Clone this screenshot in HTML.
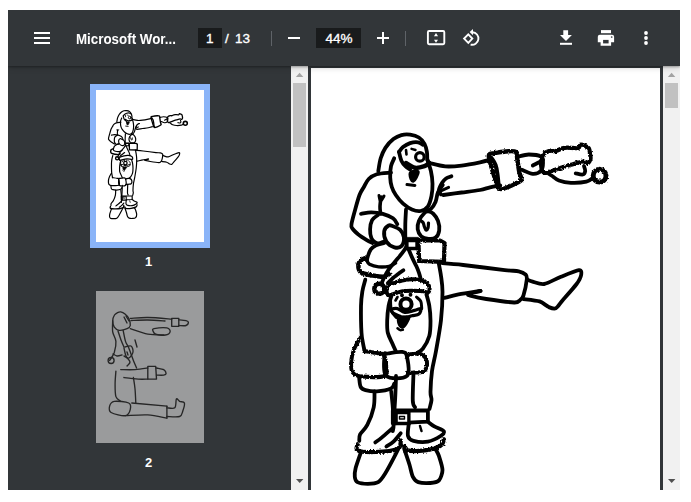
<!DOCTYPE html>
<html><head><meta charset="utf-8">
<style>
html,body{margin:0;padding:0;background:#fff;width:691px;height:502px;overflow:hidden;font-family:"Liberation Sans",sans-serif;}
.a{position:absolute;}
#frame{left:8px;top:10px;width:672px;height:480px;background:#323639;overflow:hidden;}
#toolbar{left:8px;top:10px;width:672px;height:56px;background:#323639;z-index:5;clip-path:inset(0 0 -10px 0);box-shadow:0 1px 2px rgba(0,0,0,0.3),0 2px 6px rgba(0,0,0,0.15);}
.txt{position:absolute;color:#fff;font-size:13px;white-space:nowrap;line-height:16px;-webkit-text-stroke:0.35px #fff;}
.box{position:absolute;background:#191b1c;}
.sep{position:absolute;width:1px;background:#5f6368;}
.sb{position:absolute;background:#f1f1f1;}
.thumb{position:absolute;background:#c1c1c1;}
</style></head><body>
<div id="frame" class="a"></div>
<div id="toolbar" class="a"></div>
<div class="a" style="left:0;top:0;width:691px;height:502px;z-index:6">
 <div class="txt" style="left:76px;top:30.5px;font-size:15px;font-weight:bold;-webkit-text-stroke:0;transform:scaleX(0.89);transform-origin:0 0">Microsoft Wor...</div>
 <div class="box" style="left:198px;top:28px;width:24px;height:20px"></div>
 <div class="txt" style="left:206px;top:31px;font-size:13.5px">1</div>
 <div class="txt" style="left:225px;top:31px;font-size:13.5px">/</div>
 <div class="txt" style="left:235px;top:31px;font-size:13.5px">13</div>
 <div class="sep" style="left:271px;top:31px;height:15px"></div>
 <div class="box" style="left:316px;top:28px;width:45px;height:20px"></div>
 <div class="txt" style="left:325.5px;top:31px;font-size:13.5px">44%</div>
 <div class="sep" style="left:405px;top:31px;height:15px"></div>
 <svg class="a" style="left:0;top:0" width="691" height="66">
  <g fill="#fff">
   <rect x="34" y="32" width="16" height="2"/>
   <rect x="34" y="37" width="16" height="2"/>
   <rect x="34" y="42" width="16" height="2"/>
   <!-- minus -->
   <rect x="288" y="37" width="12" height="2"/>
   <!-- plus -->
   <rect x="377" y="37" width="12" height="2"/>
   <rect x="382" y="32" width="2" height="12"/>
   <!-- download -->
   <path d="M563.3 30.3h4.8v4.8h3.8L566 41.1l-6-6h3.3z"/>
   <rect x="560" y="42.8" width="12" height="2"/>
   <!-- print -->
   <rect x="601" y="30.1" width="10" height="3.1"/>
   <path d="M599.8 34.8h12.3a2 2 0 0 1 2 2v5.5h-3v3.5h-10.5v-3.5h-2.8v-5.5a2 2 0 0 1 2-2z"/>
   <circle cx="646" cy="33" r="1.9"/>
   <circle cx="646" cy="38" r="1.9"/>
   <circle cx="646" cy="43" r="1.9"/>
   <!-- fit arrows -->
   <path d="M434 36.2h4l-2-3.1z"/>
   <path d="M434 39.7h4l-2 3.1z"/>
   <!-- rotate arrow head -->
   <path d="M473 29l-3.4 3.1 3.4 3.1z"/>
  </g>
  <g fill="#323639"><rect x="603.1" y="39.9" width="5.5" height="3.5"/></g>
  <circle cx="611.7" cy="37" r="0.85" fill="#323639"/>
  <g fill="none" stroke="#fff" stroke-width="1.9">
   <rect x="427.9" y="31" width="16.4" height="13.3" rx="1.2"/>
   <path d="M468.3 34.4l4 4.2-4 4.2-4.2-4.2z"/>
   <path d="M472.5 32.2A6.3 6.3 0 1 1 470.6 44.6"/>
  </g>
 </svg>
</div>
<!-- sidebar -->
<div class="a" style="left:90px;top:84px;width:108px;height:152px;border:6px solid #8ab4f8;background:#fff"></div>
<div class="txt" style="left:145px;top:254px;font-weight:bold;font-size:13px;-webkit-text-stroke:0">1</div>
<div class="a" style="left:96px;top:291px;width:108px;height:152px;background:#9a9b9c"></div>
<div class="txt" style="left:145px;top:455px;font-weight:bold;font-size:13px;-webkit-text-stroke:0">2</div>
<div class="sb" style="left:291px;top:66px;width:17px;height:424px"></div>
<div class="thumb" style="left:293px;top:83px;width:13px;height:64px"></div>

<!-- main -->
<div class="a" style="left:311px;top:68px;width:349px;height:422px;background:#fff"></div>
<svg class="a" style="left:0;top:0" width="691" height="502"><defs><clipPath id="pc"><rect x="311" y="68" width="349" height="422"/></clipPath></defs><g clip-path="url(#pc)"><!--DRAW--><filter id="fur" x="-20%" y="-20%" width="140%" height="140%"><feTurbulence type="fractalNoise" baseFrequency="0.6" numOctaves="1" seed="3"/><feDisplacementMap in="SourceGraphic" scale="3.5" xChannelSelector="R" yChannelSelector="G"/></filter><g id="santa" stroke="#000" stroke-linecap="round" stroke-linejoin="round"><path d="M378.3 171.0C378.7 168.9 379.5 162.2 380.7 158.3C381.9 154.5 383.3 151.1 385.4 147.9C387.5 144.7 390.7 141.2 393.4 139.1C396.1 137.0 398.6 135.8 401.4 135.1C404.2 134.4 407.2 134.3 410.1 134.7C413.0 135.1 416.5 136.0 418.9 137.5C421.3 139.0 423.2 141.5 424.5 143.9C425.8 146.3 426.4 149.2 426.9 151.9C427.4 154.6 427.0 158.1 427.4 159.9C427.8 161.7 429.0 162.2 429.3 162.7" stroke-width="3.8" fill="none"/><path d="M399.0 151.9C399.7 151.1 401.1 148.6 403.0 147.1C404.9 145.6 407.6 143.9 410.1 143.1C412.6 142.3 416.0 142.0 418.1 142.3C420.2 142.6 422.1 144.3 422.9 144.7" stroke-width="3.8" fill="none"/><path d="M399.0 151.9C399.4 153.4 400.3 158.3 401.4 160.7C402.5 163.1 403.9 164.8 405.4 166.2C406.8 167.6 409.3 168.9 410.1 169.4" stroke-width="3.8" fill="none"/><path d="M394.2 158.3C393.7 159.6 391.7 163.0 391.0 166.2C390.3 169.4 390.1 173.9 390.2 177.4C390.3 180.9 390.9 184.1 391.8 187.0C392.7 189.9 393.9 192.2 395.8 195.0C397.7 197.8 400.4 201.3 403.1 203.7C405.8 206.1 409.0 208.3 411.9 209.5C414.8 210.7 418.0 211.5 420.6 211.0C423.2 210.5 426.0 209.1 427.8 206.6C429.6 204.1 430.7 199.8 431.5 196.0C432.3 192.2 432.6 188.0 432.5 183.8C432.4 179.6 431.8 175.0 430.9 171.0C430.0 167.0 428.0 161.8 427.4 159.9" stroke-width="3.8" fill="none"/><path d="M406.0 163.0C407.5 163.8 411.8 167.3 414.9 167.8C418.0 168.3 422.1 167.0 424.5 166.2C426.9 165.4 428.5 163.5 429.3 163.0" stroke-width="4.5" fill="none"/><path d="M410.5 172.5C409.3 173.8 410.5 177.6 411.0 179.0C411.5 180.4 412.6 181.3 413.5 181.0C414.4 180.7 415.7 178.6 416.5 177.0C417.3 175.4 419.1 172.2 418.1 171.5C417.1 170.8 411.7 171.2 410.5 172.5Z" stroke-width="3.0" fill="#000"/><path d="M407.0 184.6L414.9 185.4" stroke-width="3.0" fill="none"/><path d="M406.0 150.0L406.5 154.5" stroke-width="2.6" fill="none"/><path d="M411.5 148.8L415.5 150.0" stroke-width="2.4" fill="none"/><path d="M391.0 172.6C388.6 172.9 380.4 173.1 376.7 174.2C373.0 175.3 370.8 176.9 368.7 179.0C366.6 181.1 365.4 184.3 363.9 187.0C362.4 189.7 360.9 191.2 359.5 195.0C358.1 198.8 356.5 204.7 355.2 209.5C353.9 214.3 352.0 220.9 351.5 224.1C351.0 227.2 351.2 226.7 352.3 228.4C353.4 230.1 355.7 232.2 358.1 234.2C360.5 236.1 364.4 238.6 366.8 240.1C369.2 241.6 371.6 242.5 372.6 243.0" stroke-width="3.8" fill="none"/><path d="M381.0 197.0C380.8 198.6 380.1 203.8 380.0 206.6C379.9 209.4 380.5 212.7 380.6 213.9" stroke-width="3.6" fill="none"/><path d="M379.0 195.5C379.2 196.4 379.7 200.9 380.5 201.0C381.3 201.1 383.4 196.8 384.0 196.0" stroke-width="3.0" fill="none"/><path d="M429.3 163.0C432.0 163.6 439.9 166.0 445.3 166.4C450.7 166.8 455.8 166.3 461.6 165.6C467.4 164.9 475.2 163.3 480.0 162.3C484.8 161.3 488.5 160.1 490.2 159.6" stroke-width="3.8" fill="none"/><path d="M500.3 185.5C498.6 185.8 493.4 186.6 490.0 187.3C486.6 188.1 484.7 189.1 480.0 190.0C475.3 190.9 467.7 191.7 461.6 192.5C455.5 193.3 446.4 194.6 443.3 195.0" stroke-width="3.8" fill="none"/><path d="M441.0 194.4C440.7 193.7 438.8 192.0 439.0 190.0C439.2 188.0 441.1 184.4 442.3 182.5C443.5 180.6 444.5 179.5 446.0 178.5C447.5 177.5 450.5 176.7 451.4 176.3" stroke-width="3.8" fill="none"/><path d="M440.9 190.9L448.6 187.4" stroke-width="3.0" fill="none"/><path d="M442.8 185.0C442.0 186.2 439.2 189.4 438.0 192.2C436.8 195.0 436.8 198.9 435.6 201.7C434.4 204.5 432.7 207.3 430.9 208.9C429.1 210.5 425.9 210.9 424.9 211.3" stroke-width="3.8" fill="none"/><path d="M361.0 213.9C362.7 213.7 367.6 212.4 371.2 212.4C374.8 212.4 379.2 212.9 382.8 213.9C386.4 214.9 390.6 216.6 393.0 218.3C395.4 220.0 396.6 223.1 397.3 224.1" stroke-width="3.8" fill="none"/><path d="M378.0 215.0C377.0 215.8 373.4 217.7 372.1 220.1C370.8 222.5 370.2 226.4 370.1 229.4C370.0 232.4 370.5 235.8 371.3 237.9C372.1 240.0 373.5 241.1 374.7 242.0C375.9 242.9 376.8 243.6 378.4 243.5C380.0 243.4 383.2 241.8 384.2 241.5" stroke-width="3.8" fill="none"/><path d="M388.6 225.5C387.1 226.3 384.6 228.6 384.2 231.3C383.8 234.0 384.7 238.8 386.4 241.5C388.1 244.2 391.8 246.6 394.4 247.3C396.9 248.0 400.1 247.6 401.7 245.9C403.3 244.2 404.1 239.9 403.9 237.2C403.6 234.5 402.0 231.7 400.2 229.9C398.4 228.1 394.9 227.0 393.0 226.3C391.1 225.6 390.1 224.7 388.6 225.5Z" stroke-width="3.8" fill="none"/><path d="M406.0 209.5C405.9 211.9 405.4 219.3 405.3 224.1C405.2 228.8 405.3 235.7 405.3 238.0" stroke-width="3.8" fill="none"/><path d="M424.9 212.5C423.3 214.1 420.1 218.1 418.9 220.9C417.7 223.7 417.3 226.6 417.7 229.2C418.1 231.8 419.5 234.8 421.3 236.4C423.1 238.0 426.1 238.6 428.5 238.8C430.9 239.0 433.8 239.0 435.6 237.6C437.4 236.2 438.8 233.2 439.2 230.4C439.6 227.6 439.0 223.7 438.0 220.9C437.0 218.1 434.8 215.3 433.2 213.7C431.6 212.1 429.9 211.5 428.5 211.3C427.1 211.1 426.5 210.9 424.9 212.5Z" stroke-width="3.8" fill="none"/><path d="M419.5 220.0C420.1 220.4 422.2 221.3 423.0 222.5C423.8 223.7 424.0 225.8 424.5 227.0C425.0 228.2 425.4 229.8 426.0 230.0C426.6 230.2 427.6 229.2 428.0 228.0C428.4 226.8 428.4 223.8 428.5 223.0" stroke-width="3.2" fill="none"/><path d="M404.8 237.3C404.8 237.3 418.5 237.3 418.5 237.3C418.5 237.3 418.5 250.0 418.5 250.0C418.5 250.0 404.8 250.0 404.8 250.0C404.8 250.0 404.8 237.3 404.8 237.3Z" stroke-width="0.5" fill="#000"/><path d="M408.6 242.2C408.6 242.2 415.3 242.2 415.3 242.2C415.3 242.2 415.3 246.8 415.3 246.8C415.3 246.8 408.6 246.8 408.6 246.8C408.6 246.8 408.6 242.2 408.6 242.2Z" stroke-width="0.0" fill="#fff"/><path d="M418.4 240.5C418.4 240.5 440.0 240.5 440.0 240.5C440.0 240.5 444.5 243.0 444.5 243.0C444.5 243.0 444.0 261.9 444.0 261.9C444.0 261.9 419.1 261.0 419.1 261.0C419.1 261.0 418.4 240.5 418.4 240.5Z" stroke-width="4.2" fill="none" filter="url(#fur)"/><path d="M488.8 156.4C488.4 152.9 492.2 153.6 494.2 153.1C496.2 152.6 506.3 151.3 508.5 151.2C510.7 151.1 515.2 151.3 516.1 152.0C517.0 152.7 516.9 156.5 517.2 158.6C517.5 160.7 519.0 170.8 519.4 172.9C519.8 175.0 522.4 178.7 521.5 180.0C520.6 181.3 513.0 185.2 510.7 186.0C508.4 186.8 500.8 191.2 498.6 188.2C496.4 185.2 489.2 159.9 488.8 156.4Z" stroke-width="4.4" fill="none" filter="url(#fur)"/><path d="M491.0 157.5C491.8 158.8 494.4 162.1 495.5 165.0C496.6 167.9 497.0 171.5 497.5 175.0C498.0 178.5 498.4 184.2 498.6 186.0" stroke-width="4.2" fill="none"/><path d="M518.6 156.6C520.3 156.2 525.1 154.5 528.8 154.5C532.5 154.5 538.6 155.2 541.0 156.6C543.4 158.0 543.0 160.6 543.0 163.0C543.0 165.4 542.7 169.0 541.0 170.8C539.3 172.6 536.0 174.1 532.8 173.9C529.6 173.7 523.6 170.5 521.7 169.8" stroke-width="3.8" fill="none"/><path d="M532.8 165.5C534.1 164.8 538.8 162.5 540.5 161.5C542.2 160.5 542.6 159.9 543.0 159.6" stroke-width="3.8" fill="none"/><path d="M543.4 154.1C544.7 152.2 549.0 151.0 550.6 150.6C552.2 150.2 553.7 151.5 555.3 151.2C556.9 150.9 560.9 148.7 562.5 148.2C564.1 147.7 565.2 147.6 567.3 147.6C569.4 147.6 576.3 148.6 578.1 148.2C579.9 147.8 579.6 144.9 580.5 144.6C581.4 144.3 584.1 145.3 585.2 145.8C586.3 146.3 588.2 147.3 588.8 148.2C589.4 149.1 589.8 151.5 590.0 152.9C590.2 154.3 590.9 157.5 590.6 158.9C590.3 160.3 588.6 162.9 587.6 163.2C586.6 163.5 585.0 161.3 582.8 161.5C580.6 161.7 574.1 163.9 570.9 164.8C567.7 165.7 562.4 167.4 558.9 168.5C555.4 169.6 547.0 173.5 544.6 173.0C542.2 172.5 541.2 167.4 541.0 164.9C540.8 162.4 542.1 156.0 543.4 154.1Z" stroke-width="4.2" fill="none" filter="url(#fur)"/><path d="M549.0 174.0C549.6 174.4 551.2 175.4 552.9 176.5C554.5 177.6 555.9 179.4 558.9 180.5C561.9 181.6 566.3 182.6 570.9 182.8C575.5 183.0 582.8 182.5 586.4 181.7C590.0 180.9 591.4 178.7 592.4 178.1" stroke-width="3.8" fill="none"/><path d="M575.7 173.3C576.9 173.5 581.2 174.9 582.8 174.5C584.4 174.1 585.0 172.3 585.2 170.9C585.4 169.5 584.2 166.9 584.0 166.1" stroke-width="3.8" fill="none"/><path d="M442.3 263.2C445.1 263.4 454.9 264.1 463.2 265.0C471.5 265.9 497.4 269.3 504.8 270.1C512.2 270.9 515.9 270.7 518.7 271.3C521.5 271.9 524.6 273.6 525.7 274.7C526.8 275.8 527.1 276.6 526.8 279.4C526.5 282.2 524.3 292.8 523.4 295.6C522.5 298.4 521.1 299.3 519.9 300.2C518.7 301.1 518.6 302.7 514.1 302.5C509.6 302.3 492.2 299.9 486.3 299.0C480.4 298.1 472.4 296.2 470.1 295.6C467.8 295.0 467.5 295.0 468.9 294.4C470.3 293.8 479.0 291.4 480.5 290.9" stroke-width="3.8" fill="none"/><path d="M444.6 297.9C446.9 297.3 452.5 295.6 458.5 294.4C464.5 293.2 476.8 291.5 480.5 290.9" stroke-width="3.8" fill="none"/><path d="M526.8 279.4C527.6 279.7 530.3 281.1 532.6 281.7C534.9 282.3 540.5 284.6 544.2 284.0C547.9 283.4 555.8 278.9 560.4 277.0C565.0 275.1 576.1 270.4 578.9 270.1C581.7 269.8 581.5 272.8 581.2 274.7C580.9 276.6 579.1 280.6 576.6 284.0C574.1 287.4 565.5 297.0 562.7 300.2C559.9 303.4 557.7 307.4 555.8 308.3C553.9 309.2 551.0 308.0 548.8 307.1C546.6 306.2 543.0 302.5 539.6 301.4C536.2 300.3 525.6 299.3 523.4 299.0" stroke-width="3.8" fill="none"/><path d="M364.3 258.4C363.6 258.8 360.8 259.5 359.8 261.0C358.8 262.5 358.2 265.6 358.5 267.6C358.8 269.6 359.4 271.5 361.7 272.8C364.0 274.1 368.4 274.8 372.1 275.4C375.8 276.0 381.1 276.9 383.9 276.7C386.7 276.5 388.2 274.5 389.1 274.1" stroke-width="4.6" fill="none" filter="url(#fur)"/><path d="M366.9 260.4C367.3 261.0 367.5 263.2 369.5 264.3C371.5 265.4 375.4 266.6 378.7 266.9C382.0 267.2 386.3 266.9 389.1 266.3C391.9 265.7 394.5 263.6 395.6 263.0" stroke-width="3.4" fill="none"/><path d="M384.2 243.0C382.8 243.4 378.2 244.3 376.0 245.4C373.8 246.5 372.2 247.4 370.8 249.3C369.4 251.2 368.2 255.3 367.6 257.1C367.0 259.0 367.0 259.8 366.9 260.4" stroke-width="3.8" fill="none"/><path d="M406.0 247.4C405.4 248.4 403.8 250.9 402.1 253.2C400.4 255.5 397.8 258.4 395.6 261.0C393.4 263.6 391.1 266.1 389.1 268.9C387.2 271.7 385.2 275.4 383.9 278.0C382.6 280.6 381.7 283.4 381.3 284.5" stroke-width="3.8" fill="none"/><path d="M408.6 249.3C409.2 250.8 411.2 255.6 412.5 258.4C413.8 261.2 415.3 263.9 416.4 266.3C417.5 268.7 418.2 270.5 419.0 272.8C419.8 275.1 420.7 278.8 421.0 280.0" stroke-width="3.8" fill="none"/><path d="M403.4 270.2C402.5 270.9 399.9 272.8 398.2 274.1C396.5 275.4 394.7 276.5 393.0 278.0C391.3 279.5 388.7 282.3 387.8 283.2" stroke-width="3.8" fill="none"/><path d="M387.8 285.8C390.2 283.4 397.6 281.7 402.1 280.6C406.7 279.5 411.2 279.1 415.1 279.3C419.0 279.5 423.1 280.6 425.5 281.9C427.9 283.2 429.0 285.4 429.4 287.1C429.8 288.8 429.6 291.7 428.1 292.3C426.6 292.9 424.2 291.2 420.3 291.0C416.4 290.8 409.0 290.6 404.7 291.0C400.4 291.4 397.1 293.0 394.3 293.6C391.5 294.2 388.9 296.2 387.8 294.9C386.7 293.6 385.4 288.2 387.8 285.8Z" stroke-width="4.0" fill="none" filter="url(#fur)"/><path d="M365.3 279.7C364.8 281.6 363.1 286.9 362.4 291.3C361.7 295.7 361.1 299.0 361.0 305.9C360.9 312.8 361.1 326.5 361.5 332.8C361.9 339.1 362.6 340.8 363.1 343.9C363.6 346.9 364.4 349.9 364.7 351.1" stroke-width="3.8" fill="none"/><path d="M438.5 262.0C438.9 264.3 440.3 271.0 441.0 276.0C441.7 281.0 442.5 284.7 442.5 292.0C442.5 299.3 442.1 310.2 441.0 320.0C439.9 329.8 437.5 342.5 436.0 351.0C434.5 359.5 432.9 364.2 432.0 371.0C431.1 377.8 430.6 387.2 430.5 392.0C430.4 396.8 431.7 397.2 431.5 400.0C431.3 402.8 429.8 407.4 429.5 408.9" stroke-width="3.8" fill="none"/><path d="M391.5 295.7C391.0 297.4 389.3 301.8 388.6 305.9C387.9 310.0 387.3 315.9 387.2 320.4C387.1 324.9 386.9 328.9 387.8 332.8C388.7 336.7 391.3 340.8 392.6 343.9C393.9 346.9 395.3 349.9 395.8 351.1" stroke-width="3.8" fill="none"/><path d="M426.4 294.2C426.9 296.1 428.6 301.5 429.3 305.9C430.0 310.3 430.5 315.4 430.5 320.4C430.5 325.4 430.6 331.2 429.3 335.9C428.0 340.6 425.0 345.8 422.9 348.7C420.8 351.6 417.6 352.7 416.5 353.5" stroke-width="3.8" fill="none"/><path d="M416.5 297.0C417.2 297.7 419.9 299.5 420.8 301.4C421.7 303.3 421.6 307.4 421.7 308.6" stroke-width="3.0" fill="none"/><path d="M395.5 300.5L397.5 297.0" stroke-width="2.6" fill="none"/><path d="M390.4 298.8C390.5 300.7 390.3 307.3 391.3 310.4C392.3 313.5 395.7 316.4 396.6 317.6" stroke-width="3.2" fill="none"/><path d="M391.3 309.5C392.0 308.8 395.3 308.1 397.5 308.6C399.7 309.1 401.8 312.2 404.7 312.5C407.6 312.8 411.9 311.0 414.6 310.4C417.3 309.8 420.1 308.0 420.8 308.6C421.5 309.2 420.5 312.8 419.0 314.0C417.5 315.2 414.1 315.2 411.9 315.8C409.7 316.4 407.4 317.5 405.6 317.6C403.8 317.8 403.2 317.4 401.1 316.7C399.0 315.9 394.7 314.3 393.1 313.1C391.5 311.9 390.6 310.2 391.3 309.5Z" stroke-width="3.2" fill="none"/><path d="M399.0 318.5C397.5 319.8 398.9 323.6 399.5 325.0C400.1 326.4 401.6 327.5 402.9 327.0C404.1 326.5 406.1 323.7 407.0 322.0C407.9 320.3 409.8 317.6 408.5 317.0C407.2 316.4 400.5 317.2 399.0 318.5Z" stroke-width="3.0" fill="#000"/><path d="M397.5 328.3C397.9 328.6 399.3 329.9 400.2 330.1C401.1 330.3 402.4 329.8 402.9 329.7" stroke-width="2.5" fill="none"/><path d="M360.7 337.5C359.6 339.4 355.9 344.7 354.3 348.7C352.7 352.7 351.4 357.4 351.2 361.4C350.9 365.4 350.9 370.1 352.8 372.6C354.7 375.1 357.0 376.1 362.3 376.6C367.6 377.1 380.6 377.5 384.6 375.8C388.6 374.1 386.3 369.6 386.2 366.2C386.1 362.8 384.9 357.2 383.8 355.1C382.8 353.0 383.2 354.2 379.9 353.5C376.6 352.8 366.6 351.5 363.9 351.1" stroke-width="4.0" fill="none" filter="url(#fur)"/><path d="M384.6 355.1C384.3 358.8 382.5 372.4 386.2 375.8C389.9 379.2 403.5 379.0 407.0 375.8C410.5 372.6 407.8 360.7 407.0 356.7C406.2 352.7 405.4 352.4 402.2 351.9C399.0 351.4 390.7 353.0 387.8 353.5C384.9 354.0 384.9 351.4 384.6 355.1Z" stroke-width="3.8" fill="none"/><path d="M407.0 356.7C407.5 356.3 407.7 354.7 410.1 354.3C412.5 353.9 418.5 353.1 421.3 354.3C424.1 355.5 426.4 358.6 426.9 361.4C427.4 364.2 426.5 369.1 424.5 371.0C422.5 372.9 417.8 372.3 414.9 372.6C412.0 372.9 408.3 372.6 407.0 372.6" stroke-width="4.0" fill="none" filter="url(#fur)"/><path d="M359.1 377.4C359.4 379.0 359.6 384.9 360.7 387.0C361.8 389.1 362.8 389.4 365.5 390.1C368.2 390.8 372.6 391.7 376.9 391.4C381.1 391.1 388.1 389.8 391.0 388.5C393.9 387.2 393.7 384.6 394.2 383.8" stroke-width="3.8" fill="none"/><path d="M374.5 391.4C374.4 394.0 374.9 401.7 373.7 407.3C372.5 412.9 369.6 420.4 367.3 424.9C365.0 429.4 361.4 431.8 360.1 434.4C358.8 437.0 359.4 439.7 359.3 440.8" stroke-width="3.8" fill="none"/><path d="M391.2 391.4C391.5 394.0 392.4 401.7 392.8 407.3C393.2 412.9 393.6 420.9 393.6 424.9C393.6 428.9 392.9 430.1 392.8 431.2" stroke-width="3.8" fill="none"/><path d="M392.8 428.0C390.9 429.6 384.6 435.2 381.7 437.6C378.8 440.0 376.4 441.6 375.3 442.4" stroke-width="3.8" fill="none"/><path d="M396.0 376.0C395.9 379.6 395.5 392.1 395.2 397.8C394.9 403.6 394.5 408.4 394.4 410.5" stroke-width="3.8" fill="none"/><path d="M413.5 373.0C413.4 377.6 412.5 395.2 412.8 400.9C413.1 406.6 414.7 406.2 415.1 407.3" stroke-width="3.8" fill="none"/><path d="M392.8 410.5C392.8 410.5 427.9 410.5 427.9 410.5C427.9 410.5 427.9 421.7 427.9 421.7C427.9 421.7 392.8 423.3 392.8 423.3C392.8 423.3 392.8 410.5 392.8 410.5Z" stroke-width="3.8" fill="none"/><path d="M394.5 411.0C394.5 411.0 410.3 411.0 410.3 411.0C410.3 411.0 410.3 425.0 410.3 425.0C410.3 425.0 394.5 425.0 394.5 425.0C394.5 425.0 394.5 411.0 394.5 411.0Z" stroke-width="0.5" fill="#000"/><path d="M397.8 414.3C397.8 414.3 407.2 414.3 407.2 414.3C407.2 414.3 407.2 421.7 407.2 421.7C407.2 421.7 397.8 421.7 397.8 421.7C397.8 421.7 397.8 414.3 397.8 414.3Z" stroke-width="0.0" fill="#fff"/><path d="M399.5 416.5C399.5 416.5 404.5 416.5 404.5 416.5C404.5 416.5 404.5 419.0 404.5 419.0C404.5 419.0 399.5 419.0 399.5 419.0C399.5 419.0 399.5 416.5 399.5 416.5Z" stroke-width="1.4" fill="none"/><path d="M400.7 433.3C399.5 434.7 395.9 439.5 393.5 441.7C391.1 443.9 387.6 445.7 386.4 446.5" stroke-width="3.8" fill="none"/><path d="M420.0 426.0L421.5 431.0" stroke-width="2.5" fill="none"/><path d="M408.8 423.3C408.7 425.4 407.2 433.1 408.0 436.0C408.8 438.9 410.2 439.9 413.5 440.8C416.8 441.7 423.4 442.4 427.9 441.6C432.4 440.8 438.0 437.7 440.6 436.0C443.2 434.3 444.9 432.8 443.8 431.2C442.8 429.6 437.0 428.0 434.3 426.4C431.6 424.8 429.0 422.5 427.9 421.7" stroke-width="3.8" fill="none"/><path d="M357.8 444.0C357.8 445.1 354.9 449.1 357.8 450.4C360.7 451.7 368.7 452.3 375.3 452.0C381.9 451.7 393.4 450.7 397.6 448.8C401.9 446.9 400.3 441.8 400.8 440.4" stroke-width="4.2" fill="none" filter="url(#fur)"/><path d="M404.0 445.6C404.5 446.4 403.8 449.6 407.2 450.4C410.6 451.2 419.1 451.2 424.7 450.4C430.3 449.6 437.4 447.5 440.6 445.6C443.8 443.7 443.3 440.3 443.8 439.2" stroke-width="4.2" fill="none" filter="url(#fur)"/><path d="M360.8 452.6C360.1 454.7 356.4 465.0 355.6 468.2C354.8 471.4 354.6 475.0 354.8 476.9C355.0 478.8 355.7 481.2 357.4 482.1C359.1 483.0 365.0 483.8 367.8 483.8C370.6 483.8 375.9 483.5 378.2 482.1C380.5 480.7 382.9 477.1 385.2 473.4C387.5 469.7 393.8 457.8 395.6 454.3C397.4 450.8 398.5 448.3 399.0 447.4" stroke-width="3.8" fill="none"/><path d="M404.3 449.1C405.0 451.2 408.4 461.0 409.5 464.7C410.6 468.4 411.7 474.6 412.9 476.9C414.1 479.2 415.9 481.3 418.2 482.1C420.5 482.9 427.5 483.2 430.3 483.0C433.1 482.8 437.4 482.1 439.0 480.4C440.6 478.7 442.5 473.2 442.5 470.0C442.5 466.8 439.9 458.9 439.0 456.1C438.1 453.3 436.0 450.0 435.5 449.1" stroke-width="3.8" fill="none"/><circle cx="419.9" cy="156.9" r="4.3" stroke-width="3.2" fill="none"/><circle cx="599.6" cy="175.7" r="6.4" stroke-width="5.0" fill="none" filter="url(#fur)"/><circle cx="379.3" cy="288.8" r="5.0" stroke-width="4.6" fill="none" filter="url(#fur)"/><circle cx="406.0" cy="304.2" r="5.6" stroke-width="4.0" fill="none"/><circle cx="402.0" cy="295.2" r="1.2" stroke-width="1.5" fill="#000"/><circle cx="410.5" cy="294.7" r="1.2" stroke-width="1.5" fill="#000"/></g><!--/DRAW--></g></svg>
<svg class="a" style="left:0;top:0" width="691" height="502"><use href="#santa" transform="translate(96,90) scale(0.3095) translate(-311,-68)"/><!--DRAW2--><g stroke="#262626" stroke-width="1.35" fill="none" stroke-linecap="round" stroke-linejoin="round"><path d="M112.7 320.7C112.7 318.7 113.7 316.3 114.5 315.0C115.3 313.7 116.5 313.2 117.5 312.7C118.5 312.2 119.5 311.7 120.7 311.9C122.0 312.1 123.7 312.9 125.0 314.0C126.3 315.1 127.8 316.4 128.7 318.3C129.6 320.2 130.6 323.8 130.3 325.5C130.0 327.2 129.0 327.9 127.1 328.7C125.2 329.5 121.2 330.6 119.1 330.3C117.0 330.0 115.4 328.7 114.3 327.1C113.2 325.5 112.7 322.7 112.7 320.7Z"/><path d="M130.3 318.3C133.2 318.2 140.9 317.4 147.8 317.5C154.7 317.6 167.7 318.8 171.7 319.1"/><path d="M130.3 328.7C133.2 329.6 142.2 333.1 147.8 334.2C153.4 335.2 161.0 334.9 163.7 335.0"/><path d="M171.7 318.3C171.7 318.3 178.8 318.3 178.8 318.3C178.8 318.3 178.8 326.3 178.8 326.3C178.8 326.3 171.7 326.3 171.7 326.3C171.7 326.3 171.7 318.3 171.7 318.3Z"/><path d="M178.8 319.9C180.0 320.0 184.4 320.3 186.0 320.7C187.6 321.1 188.4 321.5 188.4 322.3C188.4 323.1 187.6 325.0 186.0 325.5C184.4 326.0 180.0 325.5 178.8 325.5"/><path d="M154.1 328.7C156.4 328.2 164.2 327.4 166.9 327.9C169.6 328.4 170.4 330.6 170.1 331.8C169.8 333.0 167.7 334.6 165.3 335.0C162.9 335.4 157.8 334.9 155.7 334.2C153.6 333.5 153.3 331.9 153.0 331.0C152.7 330.1 151.8 329.2 154.1 328.7Z"/><path d="M131.0 320.5C133.8 320.4 142.1 319.9 147.8 320.0C153.5 320.1 162.1 320.8 165.0 321.0"/><path d="M124.0 317.0L127.0 323.0"/><path d="M126.0 316.0L129.0 321.0"/><path d="M125.0 347.0C126.0 346.8 129.7 345.2 131.0 346.0C132.3 346.8 133.3 350.0 133.0 352.0C132.7 354.0 130.5 357.3 129.0 358.0C127.5 358.7 124.8 356.3 124.0 356.0"/><path d="M127.0 352.0L128.0 355.0"/><path d="M135.0 340.0L137.0 347.0"/><path d="M118.0 331.0C118.5 332.5 120.0 337.3 121.0 340.0C122.0 342.7 123.5 345.8 124.0 347.0"/><path d="M112.7 320.7C112.7 322.6 112.2 328.4 112.7 331.8C113.2 335.2 115.6 337.9 115.9 341.4C116.2 344.8 115.3 349.3 114.3 352.5C113.2 355.7 110.4 359.2 109.6 360.5"/><path d="M123.1 330.3C123.5 332.1 124.6 338.5 125.5 341.4C126.4 344.3 127.4 344.6 128.7 347.8C130.0 351.0 132.1 357.1 133.4 360.5C134.7 363.9 136.1 366.8 136.6 368.0"/><path d="M124.0 348.0C124.3 349.3 125.0 353.7 126.0 356.0C127.0 358.3 129.8 360.3 130.0 362.0C130.2 363.7 127.5 365.3 127.0 366.0"/><path d="M113.0 354.0C113.7 354.3 115.5 355.8 117.0 356.0C118.5 356.2 121.2 355.2 122.0 355.0"/><path d="M120.7 369.6C123.1 369.6 130.5 369.9 135.0 369.6C139.5 369.3 145.7 368.3 147.8 368.0"/><path d="M123.9 377.5C126.3 377.8 134.2 378.8 138.2 379.1C142.2 379.4 146.2 379.1 147.8 379.1"/><path d="M147.8 366.4C147.8 366.4 155.7 366.4 155.7 366.4C155.7 366.4 156.5 379.1 156.5 379.1C156.5 379.1 147.8 379.1 147.8 379.1C147.8 379.1 147.8 366.4 147.8 366.4Z"/><path d="M156.5 368.0C157.7 368.3 162.1 368.7 163.7 369.6C165.3 370.5 166.1 372.6 166.1 373.5C166.1 374.4 165.3 374.8 163.7 375.1C162.1 375.4 157.7 375.1 156.5 375.1"/><path d="M115.9 371.1C115.8 373.2 115.1 379.6 115.1 383.9C115.1 388.1 115.0 393.7 115.9 396.6C116.8 399.5 119.9 400.6 120.7 401.4"/><path d="M133.4 377.5C133.7 379.4 134.6 384.4 135.0 388.7C135.4 392.9 135.7 400.6 135.8 403.0"/><path d="M114.3 401.4C111.1 401.9 110.1 404.3 109.6 406.2C109.1 408.1 108.4 410.9 111.1 412.5C113.8 414.1 122.3 416.2 125.5 415.7C128.7 415.2 129.8 411.5 130.3 409.4C130.8 407.3 131.4 404.3 128.7 403.0C126.0 401.7 117.5 400.9 114.3 401.4Z"/><path d="M131.8 403.0L166.9 406.2"/><path d="M125.5 415.7C129.2 415.6 140.9 414.5 147.8 414.9C154.7 415.3 163.7 417.6 166.9 418.1"/><path d="M166.9 406.2L166.9 418.1"/><path d="M166.9 407.8C168.2 407.8 173.2 409.3 174.8 407.8C176.4 406.3 175.6 400.1 176.4 399.0C177.2 397.9 178.3 400.7 179.6 401.4C180.9 402.1 183.9 401.4 184.4 403.0C184.9 404.6 183.6 408.8 182.8 411.0C182.0 413.2 182.2 415.6 179.6 416.5C176.9 417.4 169.0 416.5 166.9 416.5"/><circle cx="111.1" cy="360.5" r="3.0"/></g><!--/DRAW2--></svg>
<div class="sb" style="left:663px;top:66px;width:17px;height:424px"></div>
<div class="thumb" style="left:665px;top:83px;width:13px;height:25px"></div>
<svg class="a" style="left:0;top:0" width="691" height="502">
 <path d="M295.9 76.9h7.4l-3.7-4.1z" fill="#a3a3a3"/>
 <path d="M296 479h7.4l-3.7 4.1z" fill="#505050"/>
 <path d="M667.9 76.9h7.4l-3.7-4.1z" fill="#a3a3a3"/>
 <path d="M668 479h7.4l-3.7 4.1z" fill="#505050"/>
</svg>
</body></html>
